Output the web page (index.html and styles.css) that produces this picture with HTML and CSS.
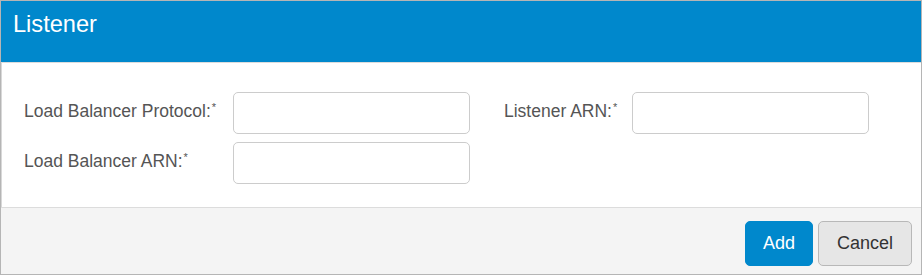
FILE: index.html
```html
<!DOCTYPE html>
<html>
<head>
<meta charset="utf-8">
<link rel="stylesheet" href="styles.css">
</head>
<body>
<div class="panel">
  <div class="panel-header">
    <h1 class="panel-title">Listener</h1>
  </div>
  <div class="panel-body">
    <div class="form-grid">
      <label class="field-label lbl-a">Load Balancer Protocol:<sup>*</sup></label>
      <input class="field-input" type="text">
      <span class="spacer"></span>
      <label class="field-label">Listener ARN:<sup>*</sup></label>
      <input class="field-input" type="text">
      <label class="field-label">Load Balancer ARN:<sup>*</sup></label>
      <input class="field-input" type="text">
    </div>
  </div>
  <div class="panel-footer">
    <button class="btn btn-primary">Add</button>
    <button class="btn btn-default">Cancel</button>
  </div>
</div>
</body>
</html>
```

FILE: styles.css
```css
html, body {
  margin: 0;
  padding: 0;
  background: #ffffff;
}
body {
  font-family: "Liberation Sans", Arial, sans-serif;
}
.panel {
  width: 922px;
  height: 275px;
  box-sizing: border-box;
  border: 1px solid #b5b5b5;
  display: flex;
  flex-direction: column;
  background: #ffffff;
}
.panel-header {
  height: 61px;
  background: #0088cc;
  border-bottom: 1px solid #dcdcdc;
  padding: 0 12px;
  display: flex;
  align-items: flex-start;
}
.panel-title {
  margin: 0;
  padding-top: 8px;
  font-size: 23.6px;
  font-weight: normal;
  color: #ffffff;
  line-height: 30px;
}
.panel-body {
  flex: 1;
  padding: 29px 0 0 21px;
  border-left: 1px solid #d8d8d8;
}
.form-grid {
  display: grid;
  grid-template-columns: 210px 237px 33px 129px 237px;
  row-gap: 8px;
  align-items: center;
}
.field-label {
  font-size: 17.5px;
  color: #555555;
  line-height: 20px;
  margin-top: -4px;
  padding-left: 1px;
}
.field-label sup {
  font-size: 11px;
  vertical-align: top;
  position: relative;
  top: -4px;
  margin-left: 1px;
}
.field-input {
  box-sizing: border-box;
  width: 237px;
  height: 42px;
  border: 1px solid #cccccc;
  border-radius: 5px;
  margin: 0;
  padding: 0 10px;
  background: #ffffff;
  font-size: 17.5px;
  font-family: inherit;
}
.panel-footer {
  height: 67px;
  box-sizing: border-box;
  background: #f4f4f4;
  border-top: 1px solid #dcdcdc;
  padding: 13px 9px 0 0;
  display: flex;
  justify-content: flex-end;
  align-items: flex-start;
  gap: 5px;
}
.btn {
  box-sizing: border-box;
  height: 45px;
  border-radius: 5px;
  font-family: inherit;
  font-size: 18px;
  padding: 0;
  margin: 0;
  cursor: pointer;
}
.btn-primary {
  width: 68px;
  background: #0088cc;
  color: #ffffff;
  border: 1px solid #0088cc;
}
.btn-default {
  width: 94px;
  background: #e6e6e6;
  color: #333333;
  border: 1px solid #b8b8b8;
}
```
